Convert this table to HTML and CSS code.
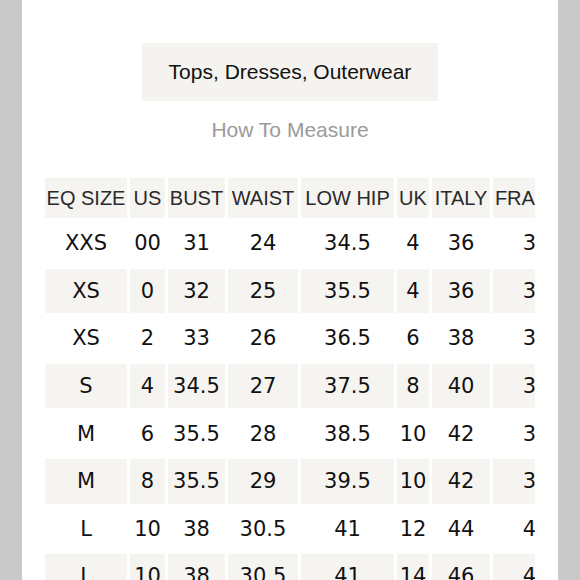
FILE: index.html
```html
<!DOCTYPE html>
<html>
<head>
<meta charset="utf-8">
<link rel="stylesheet" href="styles.css">
</head>
<body>
<div class="page">
  <div class="tab">Tops, Dresses, Outerwear</div>
  <div class="measure">How To Measure</div>
  <div class="table-wrap">
    <table class="sizes">
      <colgroup>
        <col class="c1"><col class="c2"><col class="c3"><col class="c4"><col class="c5"><col class="c6"><col class="c7"><col class="c8">
      </colgroup>
      <thead>
        <tr><th>EQ SIZE</th><th>US</th><th>BUST</th><th>WAIST</th><th>LOW HIP</th><th>UK</th><th>ITALY</th><th>FRANCE</th></tr>
      </thead>
      <tbody>
        <tr><td>XXS</td><td>00</td><td>31</td><td>24</td><td>34.5</td><td>4</td><td>36</td><td>32</td></tr>
        <tr class="shade"><td>XS</td><td>0</td><td>32</td><td>25</td><td>35.5</td><td>4</td><td>36</td><td>32</td></tr>
        <tr><td>XS</td><td>2</td><td>33</td><td>26</td><td>36.5</td><td>6</td><td>38</td><td>34</td></tr>
        <tr class="shade"><td>S</td><td>4</td><td>34.5</td><td>27</td><td>37.5</td><td>8</td><td>40</td><td>36</td></tr>
        <tr><td>M</td><td>6</td><td>35.5</td><td>28</td><td>38.5</td><td>10</td><td>42</td><td>38</td></tr>
        <tr class="shade"><td>M</td><td>8</td><td>35.5</td><td>29</td><td>39.5</td><td>10</td><td>42</td><td>38</td></tr>
        <tr><td>L</td><td>10</td><td>38</td><td>30.5</td><td>41</td><td>12</td><td>44</td><td>40</td></tr>
        <tr class="shade"><td>L</td><td>10</td><td>38</td><td>30.5</td><td>41</td><td>14</td><td>46</td><td>42</td></tr>
      </tbody>
    </table>
  </div>
</div>
</body>
</html>
```

FILE: styles.css
```css
html, body {
  margin: 0;
  padding: 0;
  background: #c9c9c9;
  height: 580px;
  overflow: hidden;
}

.page {
  margin: 0 22px;
  height: 580px;
  background: #ffffff;
  padding-top: 43px;
  box-sizing: border-box;
  font-family: "Liberation Sans", Arial, sans-serif;
}

.tab {
  width: 296px;
  height: 58px;
  margin: 0 auto;
  background: #f5f3ef;
  color: #111111;
  font-size: 21px;
  display: flex;
  align-items: center;
  justify-content: center;
}

.measure {
  margin-top: 17px;
  text-align: center;
  color: #9a9a9a;
  font-size: 21px;
  line-height: 24px;
}

.table-wrap {
  margin: 33px 23px 0 23px;
  overflow: hidden;
}

.sizes {
  margin: 0 -3px;
  border-collapse: separate;
  border-spacing: 3px;
  table-layout: fixed;
  width: 540px;
}

.c1 { width: 82px; }
.c2 { width: 35px; }
.c3 { width: 57px; }
.c4 { width: 70px; }
.c5 { width: 93px; }
.c6 { width: 32px; }
.c7 { width: 58px; }
.c8 { width: 86px; }

.sizes th {
  height: 40px;
  padding: 0;
  background: #f6f4f1;
  color: #2a2a2a;
  font-family: "Liberation Sans", Arial, sans-serif;
  font-weight: normal;
  font-size: 20px;
  white-space: nowrap;
  text-align: center;
  vertical-align: middle;
}

.sizes td {
  height: 44.6px;
  padding: 0;
  color: #111111;
  font-family: "DejaVu Sans", sans-serif;
  font-size: 21px;
  white-space: nowrap;
  text-align: center;
  vertical-align: middle;
}

.sizes tr.shade td {
  background: #f6f4f1;
}
```
